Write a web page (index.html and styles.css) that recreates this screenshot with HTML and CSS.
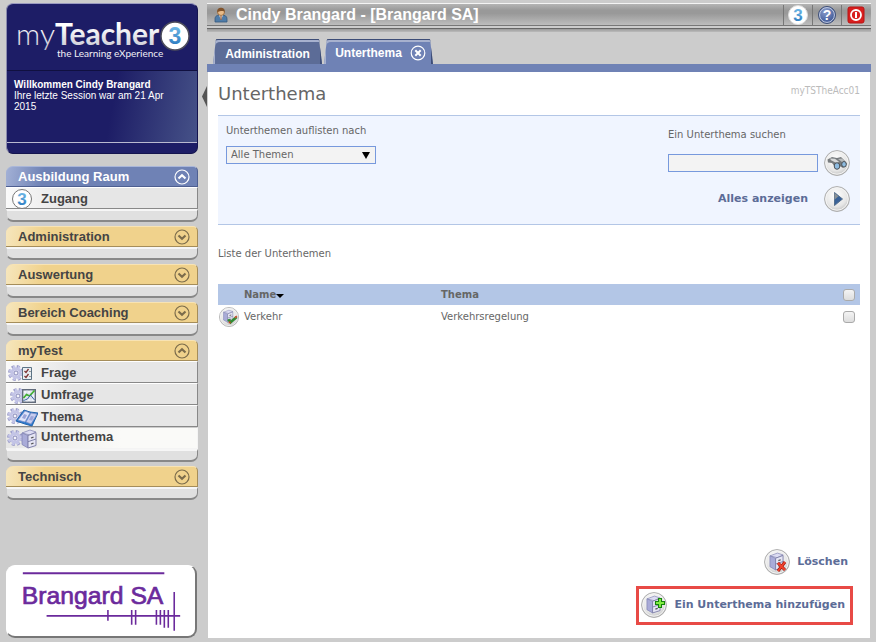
FILE: index.html
```html
<!DOCTYPE html>
<html lang="de">
<head>
<meta charset="utf-8">
<title>myTeacher - Unterthema</title>
<link rel="stylesheet" href="styles.css">
</head>
<body>
<svg class="defs" aria-hidden="true">
  <defs>
    <linearGradient id="g-blue" x1="0" y1="0" x2="0" y2="1"><stop offset="0" stop-color="#7cc4ee"/><stop offset="1" stop-color="#1f6fb8"/></linearGradient>
    <linearGradient id="g-silver" x1="0" y1="0" x2="0" y2="1"><stop offset="0.3" stop-color="#ffffff"/><stop offset="1" stop-color="#c4c4d0"/></linearGradient>
    <radialGradient id="g-ball" cx="0.45" cy="0.35" r="0.65"><stop offset="0" stop-color="#ffffff"/><stop offset="0.7" stop-color="#e6e6e6"/><stop offset="1" stop-color="#c2c2c2"/></radialGradient>
    <radialGradient id="g-help" cx="0.4" cy="0.3" r="0.7"><stop offset="0" stop-color="#8b9dcb"/><stop offset="1" stop-color="#3a5494"/></radialGradient>
    <symbol id="ball" viewBox="0 0 26 26"><circle cx="13" cy="13" r="12.4" fill="url(#g-ball)" stroke="#aaa" stroke-width="1"/><circle cx="13" cy="13" r="11.2" fill="none" stroke="#f4f4f4"/></symbol>
    <symbol id="up" viewBox="0 0 16 16"><circle cx="8" cy="8" r="7" fill="none" stroke="currentColor" stroke-width="1.2"/><path d="M4.500 9.500L8 6.300l3.500 3.200" fill="none" stroke="currentColor" stroke-width="2.200"/></symbol>
    <symbol id="down" viewBox="0 0 16 16"><circle cx="8" cy="8" r="7" fill="none" stroke="currentColor" stroke-width="1.200"/><path d="M4.500 6.500L8 9.700l3.500-3.200" fill="none" stroke="currentColor" stroke-width="2.200"/></symbol>
    <symbol id="gear" viewBox="0 0 16 16">
      <circle cx="8" cy="8" r="6.500" fill="none" stroke="#9b9cc8" stroke-width="3" stroke-dasharray="2.900 2.200"/>
      <circle cx="8" cy="8" r="6.300" fill="none" stroke="#c7c8ea" stroke-width="1.800" stroke-dasharray="2.500 2.600" stroke-dashoffset="-.2"/>
      <circle cx="8" cy="8" r="4.200" fill="#eeeefb" stroke="#c3c4e6" stroke-width="3"/>
      <circle cx="8" cy="8" r="2" fill="#f4f4fb" stroke="#8688b8" stroke-width="1"/>
    </symbol>
    <symbol id="cabinet" viewBox="0 0 16 20">
      <path d="M1 4L9 1l6 2-6 3z" fill="#dcdcf2" stroke="#8c8db8" stroke-width=".8"/>
      <path d="M1 4l6 2.500V19l-6-3.500z" fill="#a9abd8" stroke="#8385b4" stroke-width=".8"/>
      <path d="M7 6.500L15 3.500v13L7 19z" fill="#e5e5f4" stroke="#8081aa" stroke-width="1"/>
      <path d="M7 12.700l8-2.700" stroke="#8081aa"/>
      <path d="M10 9l2.500-.9M10 15l2.500-.9" stroke="#555" stroke-width="1.300"/>
    </symbol>
  </defs>
</svg>
<div class="app">
  <aside class="sidebar">
    <header class="brand">
      <svg class="brand-logo" viewBox="0 0 190 66" role="img" aria-label="myTeacher 3 the Learning eXperience">
        <text class="logo-my" x="48" y="41">my</text>
        <text class="logo-teacher" x="48" y="41">Teacher</text>
        <text class="logo-sub" x="50" y="53">the Learning eXperience</text>
        <circle cx="168" cy="32" r="14" fill="#fff" stroke="#4d4d5c" stroke-width="1.500"/>
        <text class="logo-three" x="168" y="40">3</text>
      </svg>
      <div class="welcome">
        <strong>Willkommen Cindy Brangard</strong><br>Ihre letzte Session war am 21 Apr 2015
      </div>
      <div class="brand-foot"></div>
    </header>

    <nav class="menu">
      <section class="group open-blue">
        <button class="group-head" type="button">Ausbildung Raum<svg class="arrow"><use href="#up"/></svg></button>
        <a class="item" href="#"><svg class="item-icon" viewBox="0 0 32 22"><circle cx="16" cy="11" r="9.500" fill="#fff" stroke="#777" stroke-width="1"/><text class="small-three" x="16" y="17">3</text></svg>Zugang</a>
        <div class="group-foot"></div>
      </section>
      <section class="group">
        <button class="group-head" type="button">Administration<svg class="arrow"><use href="#down"/></svg></button>
        <div class="group-foot"></div>
      </section>
      <section class="group">
        <button class="group-head" type="button">Auswertung<svg class="arrow"><use href="#down"/></svg></button>
        <div class="group-foot"></div>
      </section>
      <section class="group">
        <button class="group-head" type="button">Bereich Coaching<svg class="arrow"><use href="#down"/></svg></button>
        <div class="group-foot"></div>
      </section>
      <section class="group">
        <button class="group-head" type="button">myTest<svg class="arrow"><use href="#up"/></svg></button>
        <a class="item" href="#"><svg class="item-icon" viewBox="0 0 32 22"><use href="#gear" x="2" y="3" width="16" height="16"/><path d="M16.500 5.500h9v12h-9z" fill="#e9eef2" stroke="#5c7385"/><path d="M18.500 9l1.500 1.500L22.500 7M18.500 14l1.500 1.500 2.500-3.500" fill="none" stroke="#7d3232" stroke-width="1.300"/><path d="M24 9v1M24 14v1" stroke="#444"/></svg>Frage</a>
        <a class="item" href="#"><svg class="item-icon" viewBox="0 0 32 22"><use href="#gear" x="4" y="4" width="16" height="16"/><path d="M16.700 5.700h12.600v12.600H16.700z" fill="#f1f4fa" stroke="#626c7c" stroke-width="1.400"/><path d="M17 10h12M17 14h12M21 6v12M25 6v12" stroke="#c8d0e0" stroke-width=".7"/><path d="M17.500 14l3-3.500 3 1.500 5-5.500" fill="none" stroke="#3fae2f" stroke-width="1.700"/><path d="M17.500 16.500l4-1.500 3-4 4 5" fill="none" stroke="#3d68a6"/></svg>Umfrage</a>
        <a class="item" href="#"><svg class="item-icon" viewBox="0 0 32 22"><use href="#gear" x="1" y="2" width="16" height="16"/><path d="M10 15L18 4l6 2 8 1-6 13-7-2z" fill="#2d7bd0" stroke="#2465ad"/><path d="M12 14l7-9 5 2-5 9z" fill="#dfe4fa" stroke="#7f8fc4" stroke-width=".7"/><path d="M20 16l5-9 6 1-6 10z" fill="#c7cdef" stroke="#7f8fc4" stroke-width=".7"/><path d="M18 8l3 1-2 4-3-1zM25 10l3 .5-2 4-3-.5z" fill="#9ba4d8"/></svg>Thema</a>
        <a class="item current" href="#"><svg class="item-icon" viewBox="0 0 32 22"><use href="#gear" x="1" y="2" width="16" height="16"/><use href="#cabinet" x="15" y="1" width="16" height="20"/></svg>Unterthema</a>
        <div class="group-foot"></div>
      </section>
      <section class="group">
        <button class="group-head" type="button">Technisch<svg class="arrow"><use href="#down"/></svg></button>
        <div class="group-foot"></div>
      </section>
    </nav>

    <div class="client">
      <svg viewBox="0 0 190 70" role="img" aria-label="Brangard SA">
        <text class="client-name" x="15" y="38">Brangard SA</text>
        <g stroke="#6b2a9c" stroke-width="2" fill="none">
          <path d="M16 7h143"/>
          <path d="M40 50h135M102 44v11M126 44v15M130 44v15M151 44v15M155 44v15M159 44v18M163 44v18M169 26v39" stroke-width="1.600"/>
        </g>
      </svg>
    </div>
  </aside>

  <main class="main">
    <header class="topbar">
      <div class="bar">
        <svg class="user" viewBox="0 0 14 16"><path d="M1 15v-3c0-3 2-4 6-4s6 1 6 4v3z" fill="#4f7ca8" stroke="#36597e" stroke-width=".8"/><path d="M5 8l2 5 2-5z" fill="#f0f0f0"/><path d="M7 9v4" stroke="#9b5a32" stroke-width="1.200"/><circle cx="7" cy="5" r="3.500" fill="#e9bb88" stroke="#8a5a2c" stroke-width=".8"/><path d="M3.300 5C3 2 5 .8 7 .8S11 2 10.700 5C9.500 3.200 6 4 3.300 5z" fill="#80532b"/></svg>
        <h1>Cindy Brangard - [Brangard SA]</h1>
        <div class="tools">
          <a href="#" aria-label="myTeacher"><svg viewBox="0 0 20 20"><circle cx="10" cy="10" r="9.500" fill="#fff" stroke="#ddd"/><text class="small-three" x="10" y="16">3</text></svg></a>
          <a href="#" aria-label="Hilfe"><svg viewBox="0 0 20 20"><circle cx="10" cy="10" r="8.500" fill="url(#g-help)" stroke="#405078"/><circle cx="10" cy="10" r="7.400" fill="none" stroke="#c4cde2" stroke-width="1"/><text class="question" x="10" y="15">?</text></svg></a>
          <a href="#" aria-label="Abmelden"><svg viewBox="0 0 20 20"><rect x="2" y="2" width="16" height="16" rx="2" fill="#d81e1e" stroke="#b81414"/><circle cx="10" cy="10" r="5" fill="none" stroke="#fff" stroke-width="1.800"/><path d="M10 7v6" stroke="#fff" stroke-width="2"/></svg></a>
        </div>
      </div>
      <div class="bar-edge"></div>
    </header>
    <nav class="tabs">
      <a class="tab" href="#">Administration</a>
      <a class="tab active" href="#">Unterthema<svg class="close" viewBox="0 0 16 16"><circle cx="8" cy="8" r="6.800" fill="none" stroke="#fff" stroke-width="1.200"/><path d="M5.300 5.300l5.400 5.400M10.700 5.300l-5.400 5.400" stroke="#fff" stroke-width="2"/></svg></a>
    </nav>
    <button class="collapse" type="button" aria-label="Menü einklappen"></button>

    <div class="page">
      <div class="page-title"><h2>Unterthema</h2><span class="code">myTSTheAcc01</span></div>
      <form class="filter">
        <div class="filter-left">
          <label for="thema">Unterthemen auflisten nach</label>
          <div class="select"><select id="thema"><option>Alle Themen</option></select></div>
        </div>
        <div class="filter-right">
          <label for="suche">Ein Unterthema suchen</label>
          <div class="search-row">
            <input id="suche" type="text">
            <button class="icon-button" type="button" aria-label="Suchen"><svg viewBox="0 0 26 26"><use href="#ball"/><path d="M3.500 9.500L8 7l5 1 4-1 4 4 2 3-4 4-5-3-3 2-3-4-4-.500z" fill="#777b7e"/><path d="M6 8.500l5 .3 4 3-2 1.500-6-3z" fill="#d7d9da"/><path d="M14 9l4-.6 4 4-2 1z" fill="#b9bcbe"/><ellipse cx="13" cy="16" rx="2.800" ry="3.300" fill="#8dbbe0" stroke="#4a4f54"/><ellipse cx="20" cy="14.300" rx="2.300" ry="2.800" fill="#8dbbe0" stroke="#4a4f54"/></svg></button>
          </div>
          <a class="action show-all" href="#">Alles anzeigen<svg viewBox="0 0 26 26"><use href="#ball"/><path d="M10.500 6.500l8 6.500-8 6.500z" fill="#3a6298" stroke="#56708f"/><path d="M10.500 7l4 3.300-4 3.500z" fill="#8b9296"/></svg></a>
        </div>
      </form>

      <p class="list-title">Liste der Unterthemen</p>
      <table class="list">
        <thead><tr><th class="c-icon"></th><th class="c-name">Name<svg class="sort" viewBox="0 0 8 5"><path d="M0 1h8L4 5z"/></svg></th><th>Thema</th><th class="c-check"><input type="checkbox" aria-label="Alle auswählen"></th></tr></thead>
        <tbody><tr><td class="c-icon"><svg viewBox="0 0 26 26"><use href="#ball"/><use href="#cabinet" x="5" y="3" width="14" height="18"/><path d="M12 16l3 4 8-7" fill="none" stroke="#328b35" stroke-width="3.500"/><path d="M12 21l2-3 2 3z" fill="#c44126"/><path d="M20 13l3-2 1 2-3 2z" fill="#d25138"/></svg></td><td class="c-name">Verkehr</td><td>Verkehrsregelung</td><td class="c-check"><input type="checkbox" aria-label="Verkehr auswählen"></td></tr></tbody>
      </table>

      <div class="actions">
        <a class="action delete" href="#"><svg viewBox="0 0 26 26"><use href="#ball"/><use href="#cabinet" x="5" y="3" width="15" height="19"/><path d="M14 14l7 7M21 13l-7 9" stroke="#a31912" stroke-width="3"/><path d="M14 14l7 7M21 13l-7 9" stroke="#f0432d" stroke-width="1.800"/></svg>Löschen</a>
        <a class="action add" href="#"><svg viewBox="0 0 26 26"><use href="#ball"/><use href="#cabinet" x="5" y="3" width="15" height="19"/><path d="M17.500 6.500h3v3h3v3h-3v3h-3v-3h-3v-3h3z" fill="#82ee43" stroke="#15820d" stroke-width="1.100"/></svg>Ein Unterthema hinzufügen</a>
      </div>
    </div>
  </main>
</div>
</body>
</html>
```
FILE: styles.css
```css
* { box-sizing: border-box; }
body { margin: 0; background: #ccc; color: #666; font: 10px/14px "DejaVu Sans", sans-serif; }
a { color: inherit; text-decoration: none; }
button { font: inherit; border: 0; padding: 0; background: none; cursor: pointer; }
h1, h2, p { margin: 0; }
svg { display: block; flex: none; }
.defs { position: absolute; width: 0; height: 0; }
.app { display: grid; grid-template-columns: 192px minmax(0, 1fr); gap: 10px; min-height: 100vh; padding: 3px 6px 4px; }

/* Sidebar */
.sidebar { display: flex; flex-direction: column; font-family: "Liberation Sans", sans-serif; }
.brand { border: 1px solid #14144e; border-color: #9a9ac0 #14144e #14144e #8a8aae; border-radius: 7px; background: #1d1d66; color: #fff; overflow: hidden; }
.brand-logo { width: 100%; height: 66px; }
.logo-my { font: 300 30px Lato, sans-serif; fill: url(#g-silver); text-anchor: end; }
.logo-teacher { font: 700 30px Lato, sans-serif; fill: url(#g-silver); }
.logo-sub { font: 10px Lato, sans-serif; fill: #f0f0f6; }
.logo-three { font: 700 23px "Liberation Sans", sans-serif; fill: url(#g-blue); text-anchor: middle; }
.small-three { font: 700 17px "Liberation Sans", sans-serif; fill: url(#g-blue); text-anchor: middle; }
.question { font: 700 14px "Liberation Sans", sans-serif; fill: #fff; text-anchor: middle; }
.welcome { height: 72px; padding: 8px 24px 8px 7px; border-top: 1px solid #101040; background: linear-gradient(100deg, #1d1d66 55%, #465288); font-size: 10px; line-height: 11px; }
.brand-foot { height: 11px; border-top: 1px solid #b9b9d0; }

.menu { display: flex; flex-direction: column; gap: 4px; margin-top: 12px; }
.group-head { display: flex; align-items: center; justify-content: space-between; width: 100%; height: 21px; padding: 0 7px 0 12px; border-top: 1px solid #f8e3b3; border-right: 1px solid #a58d5a; border-bottom: 1px solid #a58d5a; border-radius: 7px 5px 0 0; background: linear-gradient(100deg, #f6e6bd, #f0d28c 20%); color: #444; font: 700 13px/16px "Liberation Sans", sans-serif; text-align: left; }
.open-blue .group-head { border-color: #a9b6d9 #4e5f91 #4e5f91; background: linear-gradient(100deg, #a3b1d6, #6f82b5 20%); color: #fff; }
.arrow { width: 16px; height: 16px; color: #7b6c4b; }
.open-blue .arrow { color: #fff; }
.item { display: flex; align-items: center; gap: 3px; height: 22px; padding-top: 2px; border-top: 1px solid #fff; border-right: 1px solid #888; border-bottom: 1px solid #888; background: linear-gradient(90deg, #fafafa, #e6e6e6 35%); color: #444; font: 700 13px/18px "Liberation Sans", sans-serif; }
.item.current { align-items: flex-start; padding-top: 0; border-color: #ccc #f4f4f4 #f4f4f4; background: linear-gradient(90deg, #e6e6e6, #fafaf8 60%); }
.item-icon { width: 32px; height: 22px; }
.group-foot { height: 13px; border: 1px solid #888; border-top: 2px solid #f6f6f6; border-left-color: #ccc; border-bottom-width: 2px; border-radius: 0 0 7px 7px; background: #e0e0e0; }
.client { margin-top: auto; margin-right: 1px; border: 1px solid #fff; border-right: 2px solid #777; border-bottom: 2px solid #777; border-radius: 9px; background: #fff; }
.client svg { width: 100%; height: 70px; }
.client-name { font: 25px "Liberation Sans", sans-serif; fill: #6b2a9c; stroke: #6b2a9c; stroke-width: .7px; }

/* Main column */
.main { position: relative; display: flex; flex-direction: column; min-width: 0; }
.topbar { margin: 0 -1px; }
.bar { display: flex; align-items: center; height: 23px; padding: 0 1px 0 7px; border-top: 1px solid #f4f4f4; border-bottom: 1px solid #777; background: linear-gradient(#b4b4b4, #999 30%, #999 45%, #bdbdbd); font-family: "Liberation Sans", sans-serif; }
.user { width: 14px; height: 16px; }
.bar h1 { margin-left: 8px; color: #fff; font-size: 16px; line-height: 20px; }
.tools { display: flex; margin-left: auto; }
.tools a { width: 29px; padding-left: 4px; border-left: 1px solid #777; }
.tools svg { width: 20px; height: 20px; }
.bar-edge { height: 4px; margin-top: 2px; border-top: 1px solid #666; background: linear-gradient(#999, #bbb); }
.tabs { display: flex; align-items: flex-end; gap: 2px; height: 40px; margin: 0 -1px; padding: 0 6px; border-bottom: 8px solid #6f82b5; font: 700 12px/16px "Liberation Sans", sans-serif; color: #fff; }
.tab { display: flex; align-items: center; justify-content: center; gap: 8px; height: 25px; width: 109px; padding-top: 3px; border-top: 1px solid #3d4d77; border-radius: 5px 4px 0 0; background: #5c6c97; clip-path: polygon(3px 0, 106px 0, 100% 100%, 0 100%); box-shadow: inset 2px 2px 0 #a7b1ce, inset -2px 0 0 #3d4d77; }
.tab.active { padding: 1px 0 0 4px; background: #6f82b5; }
.close { width: 16px; height: 16px; }
.collapse { position: absolute; left: -6px; top: 83px; width: 5px; height: 21px; background: #555; clip-path: polygon(100% 0, 0 50%, 100% 100%); }
.page { display: flex; flex: 1; flex-direction: column; padding: 11px 10px 13px; background: #fff; }
.page-title { display: flex; justify-content: space-between; height: 32px; }
h2 { font-size: 18px; line-height: 22px; font-weight: 400; }
.code { color: #bbb; font: 10px/16px "DejaVu Sans Condensed", "DejaVu Sans", sans-serif; }
.filter { display: flex; justify-content: space-between; height: 110px; padding: 8px; border: 1px solid #b3c6e6; border-width: 1px 0; background: #f0f5ff; }
.filter label { display: block; }
.select { position: relative; margin-top: 8px; }
.select::after { content: ""; position: absolute; right: 6px; top: 6px; border: 4px solid transparent; border-top: 7px solid #000; border-bottom: 0; pointer-events: none; }
select, input[type="text"] { display: block; width: 150px; height: 18px; margin: 0; padding: 0 4px; border: 1px solid #7799dd; border-radius: 0; outline: 0; background: #f3f3f3; color: #666; font: 10px/14px "DejaVu Sans", sans-serif; appearance: none; }
.filter-right { width: 184px; padding: 4px 2px 0 0; }
.search-row { display: flex; align-items: center; gap: 6px; margin-top: 8px; }
.icon-button svg, .action svg { width: 26px; height: 26px; }
.action { display: flex; align-items: center; gap: 7px; color: #5c6c97; font-size: 11px; line-height: 16px; font-weight: 700; }
.show-all { justify-content: flex-end; gap: 16px; margin-top: 10px; }
.list-title { margin-top: 22px; }
.list { width: 100%; margin-top: 23px; border-collapse: collapse; table-layout: fixed; }
.list th, .list td { padding: 0; text-align: left; }
.list th { height: 21px; background: #b3c6e6; }
.list td { height: 23px; }
.list .c-icon { width: 26px; }
.list .c-name { width: 197px; }
.list .c-check { width: 22px; }
.c-icon svg { width: 20px; height: 20px; margin-left: 1px; }
.sort { display: inline-block; width: 8px; height: 5px; }
input[type="checkbox"] { display: block; width: 12px; height: 12px; margin: 0 0 0 5px; border: 1px solid #aaa; border-radius: 3px; background: linear-gradient(#f4f4f4, #ddd); appearance: none; }
.actions { display: flex; flex-direction: column; align-items: flex-end; gap: 11px; margin-top: auto; }
.delete { margin-right: 12px; }
.add { margin-right: 7px; padding: 3px 5px 4px 2px; border: 3px solid #e84a46; }
```
